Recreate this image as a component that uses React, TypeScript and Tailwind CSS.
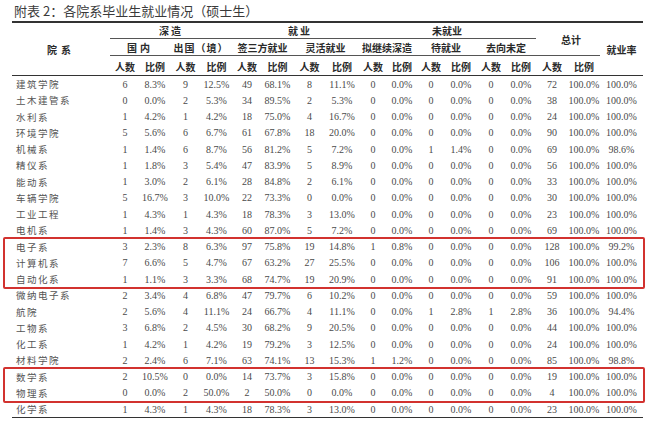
import React from "react";

const cols =
  "grid grid-cols-[98px_30px_30px_31px_31px_30px_31px_33px_32px_30px_28px_30px_30px_30px_30px_32px_32px_43px]";

type Row = [string, ...string[]];

const rows: Row[] = [
  ["建筑学院", "6", "8.3%", "9", "12.5%", "49", "68.1%", "8", "11.1%", "0", "0.0%", "0", "0.0%", "0", "0.0%", "72", "100.0%", "100.0%"],
  ["土木建管系", "0", "0.0%", "2", "5.3%", "34", "89.5%", "2", "5.3%", "0", "0.0%", "0", "0.0%", "0", "0.0%", "38", "100.0%", "100.0%"],
  ["水利系", "1", "4.2%", "1", "4.2%", "18", "75.0%", "4", "16.7%", "0", "0.0%", "0", "0.0%", "0", "0.0%", "24", "100.0%", "100.0%"],
  ["环境学院", "5", "5.6%", "6", "6.7%", "61", "67.8%", "18", "20.0%", "0", "0.0%", "0", "0.0%", "0", "0.0%", "90", "100.0%", "100.0%"],
  ["机械系", "1", "1.4%", "6", "8.7%", "56", "81.2%", "5", "7.2%", "0", "0.0%", "1", "1.4%", "0", "0.0%", "69", "100.0%", "98.6%"],
  ["精仪系", "1", "1.8%", "3", "5.4%", "47", "83.9%", "5", "8.9%", "0", "0.0%", "0", "0.0%", "0", "0.0%", "56", "100.0%", "100.0%"],
  ["能动系", "1", "3.0%", "2", "6.1%", "28", "84.8%", "2", "6.1%", "0", "0.0%", "0", "0.0%", "0", "0.0%", "33", "100.0%", "100.0%"],
  ["车辆学院", "5", "16.7%", "3", "10.0%", "22", "73.3%", "0", "0.0%", "0", "0.0%", "0", "0.0%", "0", "0.0%", "30", "100.0%", "100.0%"],
  ["工业工程", "1", "4.3%", "1", "4.3%", "18", "78.3%", "3", "13.0%", "0", "0.0%", "0", "0.0%", "0", "0.0%", "23", "100.0%", "100.0%"],
  ["电机系", "1", "1.4%", "3", "4.3%", "60", "87.0%", "5", "7.2%", "0", "0.0%", "0", "0.0%", "0", "0.0%", "69", "100.0%", "100.0%"],
];

const box1: Row[] = [
  ["电子系", "3", "2.3%", "8", "6.3%", "97", "75.8%", "19", "14.8%", "1", "0.8%", "0", "0.0%", "0", "0.0%", "128", "100.0%", "99.2%"],
  ["计算机系", "7", "6.6%", "5", "4.7%", "67", "63.2%", "27", "25.5%", "0", "0.0%", "0", "0.0%", "0", "0.0%", "106", "100.0%", "100.0%"],
  ["自动化系", "1", "1.1%", "3", "3.3%", "68", "74.7%", "19", "20.9%", "0", "0.0%", "0", "0.0%", "0", "0.0%", "91", "100.0%", "100.0%"],
];

const mid: Row[] = [
  ["微纳电子系", "2", "3.4%", "4", "6.8%", "47", "79.7%", "6", "10.2%", "0", "0.0%", "0", "0.0%", "0", "0.0%", "59", "100.0%", "100.0%"],
  ["航院", "2", "5.6%", "4", "11.1%", "24", "66.7%", "4", "11.1%", "0", "0.0%", "1", "2.8%", "1", "2.8%", "36", "100.0%", "94.4%"],
  ["工物系", "3", "6.8%", "2", "4.5%", "30", "68.2%", "9", "20.5%", "0", "0.0%", "0", "0.0%", "0", "0.0%", "44", "100.0%", "100.0%"],
  ["化工系", "1", "4.2%", "1", "4.2%", "19", "79.2%", "3", "12.5%", "0", "0.0%", "0", "0.0%", "0", "0.0%", "24", "100.0%", "100.0%"],
  ["材料学院", "2", "2.4%", "6", "7.1%", "63", "74.1%", "13", "15.3%", "1", "1.2%", "0", "0.0%", "0", "0.0%", "85", "100.0%", "98.8%"],
];

const box2: Row[] = [
  ["数学系", "2", "10.5%", "0", "0.0%", "14", "73.7%", "3", "15.8%", "0", "0.0%", "0", "0.0%", "0", "0.0%", "19", "100.0%", "100.0%"],
  ["物理系", "0", "0.0%", "2", "50.0%", "2", "50.0%", "0", "0.0%", "0", "0.0%", "0", "0.0%", "0", "0.0%", "4", "100.0%", "100.0%"],
];

const last: Row[] = [
  ["化学系", "1", "4.3%", "1", "4.3%", "18", "78.3%", "3", "13.0%", "0", "0.0%", "0", "0.0%", "0", "0.0%", "23", "100.0%", "100.0%"],
];

const DataRow = ({ row }: { row: Row }) => {
  const [name, ...vals] = row;
  return (
    <div className={`${cols} h-[16.25px] items-center`}>
      <div className="pl-[4px] text-[9.5px] tracking-[1.5px] text-[#555] font-['Noto_Sans_CJK_SC',sans-serif]">
        {name}
      </div>
      {vals.map((v, i) => (
        <div key={i} className="text-center text-[10px] text-[#4a4a4a] font-['Liberation_Serif',serif]">
          {v}
        </div>
      ))}
    </div>
  );
};

const RedBox = ({ items }: { items: Row[] }) => (
  <div className="-ml-[9px] -mr-[2px] -my-[2px] border-2 border-[#d2322f] rounded-[2px] pl-[7px]">
    {items.map((r) => (
      <DataRow key={r[0]} row={r} />
    ))}
  </div>
);

const th = "flex items-center justify-center";

export default function App() {
  return (
    <div className="w-[650px] h-[423px] bg-white overflow-hidden font-['Noto_Sans_CJK_SC',sans-serif]">
      <div className="h-[21px] pl-[14px] flex items-center text-[13px] text-[#3a3a3a]">
        附表 2：各院系毕业生就业情况（硕士生）
      </div>
      <div className="ml-[12px] w-[631px] border-t-2 border-b-[1.5px] border-[#333]">
        {/* header */}
        <div className={`${cols} grid-rows-[16px_17px_19px] border-b-[1.5px] border-[#333] text-[10px] font-bold text-[#2a2a2a]`}>
          <div className={`${th} row-span-3 tracking-[4px]`}>院系</div>
          <div className={`${th} col-span-4 border-b border-[#555] tracking-[2px]`}>深造</div>
          <div className={`${th} col-span-4 border-b border-[#555] tracking-[2px] pl-[10px]`}>就业</div>
          <div className={`${th} col-span-6 border-b border-[#555]`}>未就业</div>
          <div className={`${th} col-span-2 row-span-2 border-b border-[#555] pl-[6px]`}>总计</div>
          <div className={`${th} row-span-3`}>就业率</div>
          <div className={`${th} col-span-2 border-b border-[#555] tracking-[3px]`}>国内</div>
          <div className={`${th} col-span-2 border-b border-[#555] tracking-[1px]`}>出国（境）</div>
          <div className={`${th} col-span-2 border-b border-[#555]`}>签三方就业</div>
          <div className={`${th} col-span-2 border-b border-[#555]`}>灵活就业</div>
          <div className={`${th} col-span-2 border-b border-[#555]`}>拟继续深造</div>
          <div className={`${th} col-span-2 border-b border-[#555]`}>待就业</div>
          <div className={`${th} col-span-2 border-b border-[#555]`}>去向未定</div>
          {["人数", "比例", "人数", "比例", "人数", "比例", "人数", "比例", "人数", "比例", "人数", "比例", "人数", "比例", "人数", "比例"].map((t, i) => (
            <div key={i} className={`${th} pt-[2px]`}>
              {t}
            </div>
          ))}
        </div>
        {/* body */}
        {rows.map((r) => (
          <DataRow key={r[0]} row={r} />
        ))}
        <RedBox items={box1} />
        {mid.map((r) => (
          <DataRow key={r[0]} row={r} />
        ))}
        <RedBox items={box2} />
        {last.map((r) => (
          <DataRow key={r[0]} row={r} />
        ))}
      </div>
    </div>
  );
}
